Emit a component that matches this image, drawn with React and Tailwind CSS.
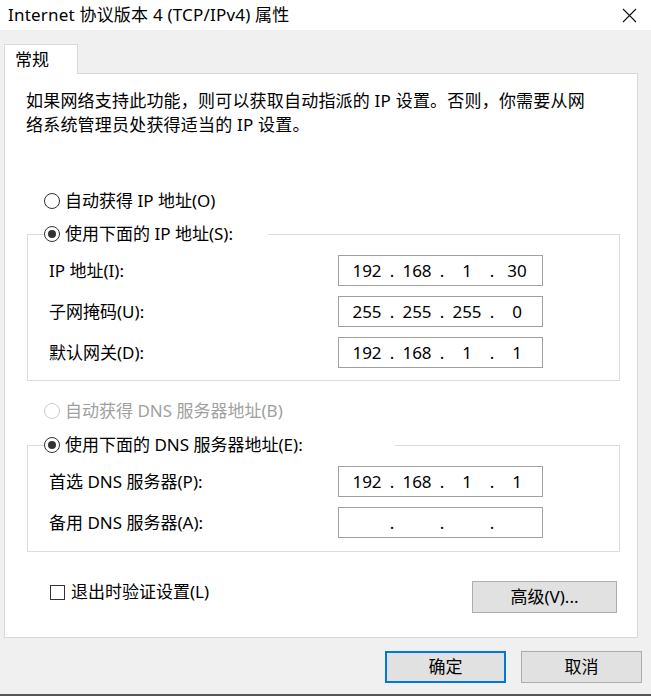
import React from 'react';

const font = "font-['Noto_Sans','Noto_Sans_CJK_SC',sans-serif]";

const Radio = ({ checked, disabled, label }) => (
  <div className={`flex items-center h-[24px] ${disabled ? 'text-[#a0a0a0]' : 'text-black'}`}>
    <span
      className={`w-[16px] h-[16px] rounded-full border bg-white flex items-center justify-center mr-[5px] ${
        disabled ? 'border-[#cccccc]' : 'border-[#333333]'
      }`}
    >
      {checked && <span className='w-[8px] h-[8px] rounded-full bg-[#333333]'></span>}
    </span>
    <span>{label}</span>
  </div>
);

const IpBox = ({ parts }) => (
  <div className='w-[205px] h-[31px] border border-[#a0a0a0] bg-white flex items-center pl-[8px]'>
    {parts.map((p, i) => (
      <React.Fragment key={i}>
        <span className='w-[40px] text-center'>{p}</span>
        {i < 3 && <span className='w-[10px] text-center'>.</span>}
      </React.Fragment>
    ))}
  </div>
);

const Row = ({ label, parts }) => (
  <div className='flex items-center h-[31px]'>
    <span className='w-[289px]'>{label}</span>
    <IpBox parts={parts} />
  </div>
);

const Group = ({ legend, legendWidth, children, pb }) => (
  <fieldset className={`ml-[22px] w-[593px] border border-[#dcdcdc] ${pb}`}>
    <legend className={`ml-[16px] bg-white ${legendWidth}`}>
      <Radio checked label={legend} />
    </legend>
    <div className='pl-[21px] pt-[9px] flex flex-col gap-[10px]'>{children}</div>
  </fieldset>
);

const Button = ({ children, primary, className }) => (
  <button
    className={`h-[32px] bg-[#e1e1e1] text-black flex items-center justify-center ${
      primary ? 'border-2 border-[#0078d7]' : 'border border-[#adadad]'
    } ${className}`}
  >
    {children}
  </button>
);

export default function App() {
  return (
    <div className={`w-[651px] h-[696px] bg-[#f0f0f0] flex flex-col text-[17px] text-black ${font} border-b-2 border-[#555555]`}>
      {/* Title bar */}
      <div className='h-[30px] bg-white flex items-center justify-between pl-[8px] pr-[14px] shrink-0'>
        <span className='tracking-[0.2px]'>Internet 协议版本 4 (TCP/IPv4) 属性</span>
        <svg width='15' height='15' viewBox='0 0 15 15'>
          <path d='M1 1 L14 14 M14 1 L1 14' stroke='#111' strokeWidth='1.1' fill='none' />
        </svg>
      </div>

      {/* Tabs */}
      <div className='pt-[14px] pl-[4px]'>
        <div className='relative z-10 -mb-px w-[74px] h-[30px] bg-white border border-b-0 border-[#d9d9d9] flex items-center pl-[10px]'>
          常规
        </div>
        <div className='w-[634px] h-[565px] bg-white border border-[#d9d9d9]'>
          <p className='pl-[21px] pt-[15px] leading-[24px] tracking-[0.2px]'>
            如果网络支持此功能，则可以获取自动指派的 IP 设置。否则，你需要从网
            <br />
            络系统管理员处获得适当的 IP 设置。
          </p>

          <div className='ml-[39px] mt-[52px]'>
            <Radio label='自动获得 IP 地址(O)' />
          </div>

          <div className='mt-[9px]'>
            <Group legend='使用下面的 IP 地址(S):' legendWidth='w-[224px]' pb='pb-[12px]'>
              <Row label='IP 地址(I):' parts={['192', '168', '1', '30']} />
              <Row label='子网掩码(U):' parts={['255', '255', '255', '0']} />
              <Row label='默认网关(D):' parts={['192', '168', '1', '1']} />
            </Group>
          </div>

          <div className='ml-[39px] mt-[18px]'>
            <Radio disabled label='自动获得 DNS 服务器地址(B)' />
          </div>

          <div className='mt-[10px]'>
            <Group legend='使用下面的 DNS 服务器地址(E):' legendWidth='w-[351px]' pb='pb-[13px]'>
              <Row label='首选 DNS 服务器(P):' parts={['192', '168', '1', '1']} />
              <Row label='备用 DNS 服务器(A):' parts={['', '', '', '']} />
            </Group>
          </div>

          <div className='mt-[28px] pl-[45px] pr-[20px] flex justify-between items-start'>
            <label className='flex items-center h-[24px]'>
              <span className='w-[15px] h-[15px] border border-[#333333] bg-white mr-[6px]'></span>
              退出时验证设置(L)
            </label>
            <Button className='w-[145px] mt-[1px]'>高级(V)...</Button>
          </div>
        </div>
      </div>

      {/* Footer buttons */}
      <div className='flex justify-end gap-[15px] pr-[9px] mt-[13px]'>
        <Button primary className='w-[121px]'>确定</Button>
        <Button className='w-[121px]'>取消</Button>
      </div>
    </div>
  );
}
